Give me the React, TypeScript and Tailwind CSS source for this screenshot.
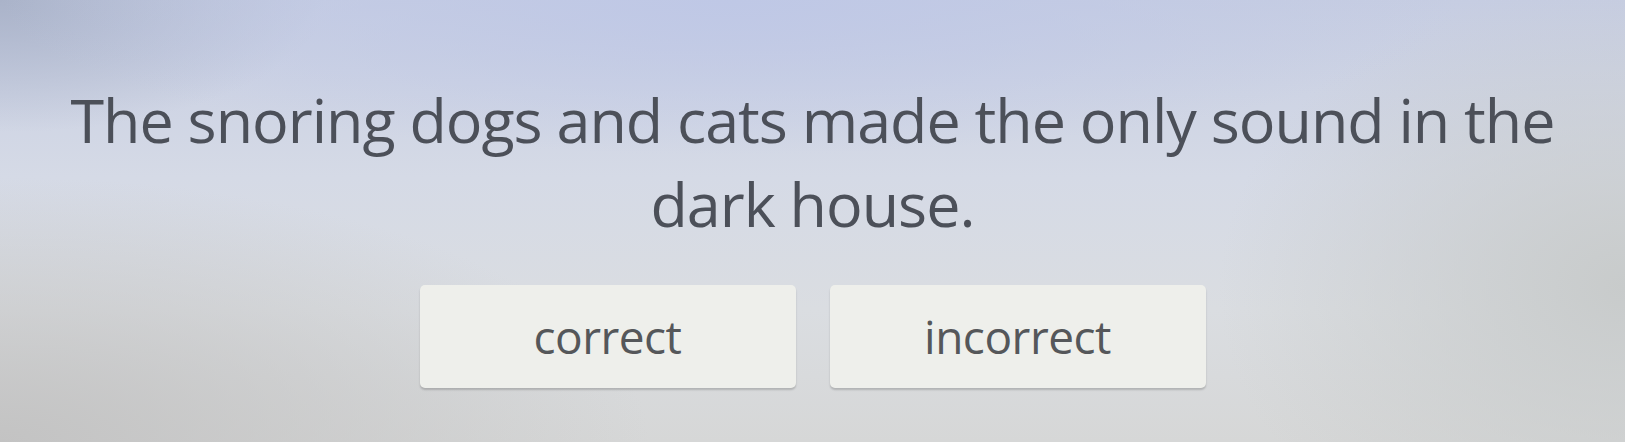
import React from 'react';

const answers = ['correct', 'incorrect'];

export default function App() {
  return (
    <div className="h-[442px] w-full overflow-hidden bg-[image:radial-gradient(ellipse_40%_60%_at_0%_100%,#c3c3c3_0%,transparent_100%),radial-gradient(ellipse_25%_70%_at_100%_65%,#c8cbcb_0%,transparent_100%),radial-gradient(ellipse_45%_35%_at_45%_0%,#bfc8e6_0%,transparent_100%),radial-gradient(ellipse_20%_30%_at_0%_0%,#aab3c9_0%,transparent_100%),linear-gradient(180deg,#c6cde2_0%,#d5dae6_40%,#dadde1_70%,#d6d7d7_100%)] font-['Open_Sans',sans-serif]">
      <div className="flex flex-col items-center pt-[78px]">
        <h1 className="text-center text-[61px] font-normal leading-[84px] tracking-[-1px] whitespace-nowrap text-[#4c5059]">
          The snoring dogs and cats made the only sound in the
          <br />
          dark house.
        </h1>
        <div className="mt-[39px] flex gap-[34px]">
          {answers.map((a) => (
            <button
              key={a}
              className="flex h-[103px] w-[376px] items-center justify-center rounded-[5px] bg-[#eeefeb] text-[46px] tracking-[-0.5px] text-[#55575a] shadow-[0_2px_2px_rgba(0,0,0,0.18)]"
            >
              {a}
            </button>
          ))}
        </div>
      </div>
    </div>
  );
}
